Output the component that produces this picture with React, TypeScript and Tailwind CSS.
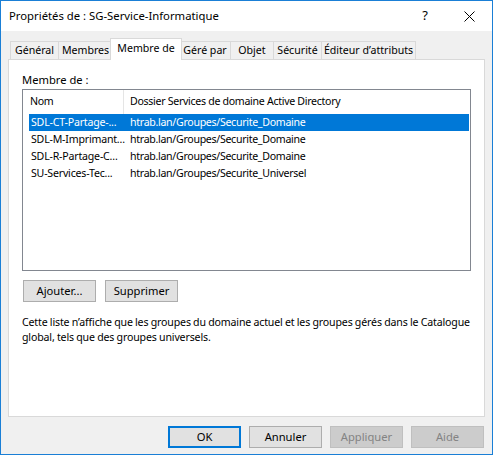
import React, { useState } from 'react'

// tab label, box width, left offset (tabs overlap by their borders)
const tabs = [
    { label: 'Général', w: 'w-[49px]', ml: '' },
    { label: 'Membres', w: 'w-[55px]', ml: '-ml-[1px]' },
    { label: 'Membre de', w: 'w-[72px]', ml: '-ml-[3px]' },
    { label: 'Géré par', w: 'w-[52px]', ml: '-ml-[3px]' },
    { label: 'Objet', w: 'w-[44px]', ml: '-ml-[1px]' },
    { label: 'Sécurité', w: 'w-[49px]', ml: '-ml-[1px]' },
    { label: 'Éditeur d’attributs', w: 'w-[95px]', ml: '-ml-[1px]' },
]

const groups = [
    { name: 'SDL-CT-Partage-...', folder: 'htrab.lan/Groupes/Securite_Domaine' },
    { name: 'SDL-M-Imprimant...', folder: 'htrab.lan/Groupes/Securite_Domaine' },
    { name: 'SDL-R-Partage-C...', folder: 'htrab.lan/Groupes/Securite_Domaine' },
    { name: 'SU-Services-Tec...', folder: 'htrab.lan/Groupes/Securite_Universel' },
]

const Button = ({ label, primary = false, disabled = false }) => (
    <button
        disabled={disabled}
        className={`h-[22px] w-[73px] flex items-center justify-center border ${
            primary ? 'border-[#0078d7] shadow-[inset_0_0_0_1px_#0078d7]' : disabled ? 'border-[#bfbfbf]' : 'border-[#adadad]'
        } ${disabled ? 'bg-[#cccccc] text-[#838383]' : 'bg-[#e1e1e1] text-black'}`}
    >
        {label}
    </button>
)

export default function App() {
    const [active, setActive] = useState(2)
    const [selected, setSelected] = useState(0)

    return (
        <div
            className="w-[493px] h-[455px] flex flex-col border border-[#1a7fd6] bg-[#f0f0f0] text-[11.2px] text-black select-none"
            style={{ fontFamily: '"Noto Sans", "Segoe UI", sans-serif' }}
        >
            {/* title bar */}
            <div className="h-[30px] bg-white flex items-center pl-[8px]">
                <span className="flex-1 pt-[1px] text-[11.3px]">Propriétés de : SG-Service-Informatique</span>
                <span className="w-[46px] text-center text-[13px] pl-[4px]">?</span>
                <span className="w-[46px] flex justify-center">
                    <svg width="11" height="11" viewBox="0 0 11 11">
                        <path d="M0.5 0.5 L10.5 10.5 M10.5 0.5 L0.5 10.5" stroke="#000" strokeWidth="1" />
                    </svg>
                </span>
            </div>

            <div className="flex-1 flex flex-col px-[7px] pt-[7px]">
                {/* tab strip */}
                <div className="flex items-end h-[21px] pl-[2px] relative z-10 text-[10.6px]">
                    {tabs.map((t, i) =>
                        i === active ? (
                            <div
                                key={t.label}
                                onClick={() => setActive(i)}
                                className={`${t.w} ${t.ml} h-[22px] -mb-[1px] pt-[2px] bg-white border border-b-0 border-[#d9d9d9] flex justify-center items-start whitespace-nowrap relative z-10`}
                            >
                                {t.label}
                            </div>
                        ) : (
                            <div
                                key={t.label}
                                onClick={() => setActive(i)}
                                className={`${t.w} ${t.ml} h-[18px] bg-[#f0f0f0] border border-b-0 border-[#d9d9d9] flex justify-center items-center whitespace-nowrap`}
                            >
                                {t.label}
                            </div>
                        )
                    )}
                </div>

                {/* panel */}
                <div className="h-[358px] bg-white border border-[#d9d9d9] px-[13px] pt-[12px] flex flex-col">
                    <div className="leading-[15px]">Membre de :</div>

                    <div className="mt-[2px] h-[182px] border border-[#828790] flex flex-col text-[10.6px] tracking-[-0.3px]">
                        <div className="h-[24px] flex items-center">
                            <div className="w-[100px] pl-[7px] h-full flex items-center">Nom</div>
                            <div className="h-full border-l border-[#e5e5e5] pl-[6px] flex items-center whitespace-nowrap">
                                Dossier Services de domaine Active Directory
                            </div>
                        </div>
                        <div className="pl-[6px] pr-[1px]">
                            {groups.map((g, i) => (
                                <div
                                    key={i}
                                    onClick={() => setSelected(i)}
                                    className={`h-[17px] flex items-center ${i === selected ? 'bg-[#0078d7] text-white' : ''}`}
                                >
                                    <div className="w-[94px] pl-[2px] whitespace-nowrap tracking-[-0.2px]">{g.name}</div>
                                    <div className="pl-[7px] whitespace-nowrap">{g.folder}</div>
                                </div>
                            ))}
                        </div>
                    </div>

                    <div className="flex gap-[9px] mt-[9px] pl-[1px]">
                        <Button label="Ajouter..." />
                        <Button label="Supprimer" />
                    </div>

                    <p className="mt-[13px] leading-[15px] whitespace-nowrap text-[10.6px] tracking-[-0.15px] [word-spacing:-0.3px]">
                        Cette liste n’affiche que les groupes du domaine actuel et les groupes gérés dans le Catalogue
                        <br />
                        global, tels que des groupes universels.
                    </p>
                </div>

                {/* dialog buttons */}
                <div className="flex justify-end gap-[8px] mt-[9px] pr-[1px]">
                    <Button label="OK" primary />
                    <Button label="Annuler" />
                    <Button label="Appliquer" disabled />
                    <Button label="Aide" disabled />
                </div>
            </div>
        </div>
    )
}
